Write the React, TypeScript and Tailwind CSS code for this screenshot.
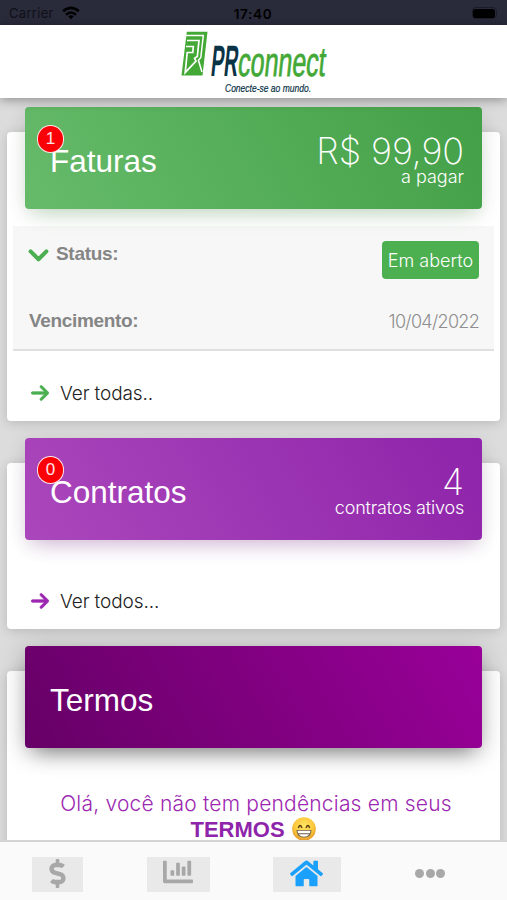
import React from "react";
import { FaChartBar, FaDollarSign, FaHome } from "react-icons/fa";
import { FaArrowRight, FaChevronDown } from "react-icons/fa6";

interface SummaryCardProps {
  title: string;
  badge?: string;
  value?: string;
  caption?: string;
  captionClass?: string;
  headerClass: string;
  className?: string;
  children: React.ReactNode;
}

const WifiIcon: React.FC = () => (
  <svg viewBox="0 0 18 14" className="h-[14px] w-[18px]" fill="none" stroke="#000" strokeWidth="2.6">
    <path d="M1.2 5.2 Q9 -1.600 16.800 5.200" />
    <path d="M4 8.700 Q9 4.300 14 8.700" />
    <path d="M6.200 10.200 Q9 8.200 11.800 10.200 L9 13.300 Z" fill="#000" stroke="none" />
  </svg>
);

const StatusBar: React.FC = () => (
  <div className="flex h-[25px] shrink-0 items-center justify-between bg-[#292a3a] pr-[10px] pl-[9px] text-black">
    <div className="flex w-[120px] items-center gap-[8px] pt-[1px]">
      <span className="font-['Inter'] text-[13px] leading-[16px] tracking-[0.3px] text-[#101018]">Carrier</span>
      <WifiIcon />
    </div>
    <span className="pt-[3px] font-['Inter'] text-[13.5px] leading-[16px] font-semibold tracking-[0.7px]">
      17:40
    </span>
    <div className="flex w-[120px] justify-end">
      <div className="mt-[1px] flex h-[12px] w-[25px] items-center justify-center rounded-[4px] border border-[#1c1c28]">
        <div className="h-[9px] w-[22px] rounded-[2.5px] bg-black"></div>
      </div>
    </div>
  </div>
);

const Logo: React.FC = () => (
  <svg viewBox="0 0 150 73" className="h-[73px] w-[150px] overflow-visible">
    {/* Mark */}
    <path d="M8.800 6.700 H29.500 L24.500 50.500 H3.500 Z" fill="#43a836" />
    <path
      d="M6.500 10.500 H25.300 L22.800 32.500 L20.400 35.300 L24 47"
      fill="none"
      stroke="#fff"
      strokeWidth="1.500"
    />
    <path
      d="M9 15.500 H21 L19.300 31.500 L16.600 33.300 L18 36 L7.200 47.500 L9.200 27.500 H14.800 L15.300 21.500 H8"
      fill="none"
      stroke="#fff"
      strokeWidth="1.700"
    />
    {/* Wordmark */}
    <g transform="translate(32 50.500) skewX(-6)" fontFamily="'Liberation Sans', sans-serif">
      <text
        fontSize="44"
        fontWeight="700"
        fill="#0b3346"
        textLength="27"
        lengthAdjust="spacingAndGlyphs"
      >
        PR
      </text>
      <text
        x="27"
        fontSize="41"
        fill="#43a836"
        stroke="#43a836"
        strokeWidth="0.800"
        textLength="87.500"
        lengthAdjust="spacingAndGlyphs"
      >
        connect
      </text>
    </g>
    <text
      x="47"
      y="66.500"
      fontSize="10.500"
      fontStyle="italic"
      fontFamily="'Liberation Sans', sans-serif"
      fill="#0b3346"
      stroke="#0b3346"
      strokeWidth="0.200"
      textLength="86"
      lengthAdjust="spacingAndGlyphs"
    >
      Conecte-se ao mundo.
    </text>
  </svg>
);

const GrinEmoji: React.FC = () => (
  <svg viewBox="0 0 24 24" className="ml-[7px] inline-block h-[24px] w-[24px] align-top">
    <defs>
      <radialGradient id="face" cx="50%" cy="38%" r="62%">
        <stop offset="0%" stopColor="#ffe566" />
        <stop offset="65%" stopColor="#fcc83a" />
        <stop offset="100%" stopColor="#e5952a" />
      </radialGradient>
    </defs>
    <circle cx="12" cy="12" r="11.800" fill="url(#face)" />
    <path
      d="M6.500 10.500 Q8 6.500 9.800 10.500 M14.200 10.500 Q16 6.500 17.500 10.500"
      fill="none"
      stroke="#5c3a12"
      strokeWidth="1.400"
      strokeLinecap="round"
    />
    <path d="M4.500 13 H19.500 Q19.500 20.500 12 20.500 Q4.500 20.500 4.500 13 Z" fill="#6b5a45" />
    <path
      d="M5.500 13.700 H18.500 L18 16.300 H6 Z M6.600 17.200 H17.400 Q15.500 19.700 12 19.700 Q8.500 19.700 6.600 17.200 Z"
      fill="#fff"
    />
  </svg>
);

const SummaryCard: React.FC<SummaryCardProps> = ({
  title,
  badge,
  value,
  caption,
  captionClass,
  headerClass,
  className,
  children,
}) => (
  <section
    className={`mx-[7px] w-[493px] shrink-0 rounded-[4px] bg-white shadow-[0_2px_12px_rgba(0,0,0,0.16)] ${className ?? ""}`}
  >
    <div
      className={`relative mx-[18px] -mt-[25px] flex h-[102px] w-[457px] justify-between rounded-[4px] px-[18px] text-white ${headerClass}`}
    >
      <h2 className="mt-[35px] ml-[7px] text-[31.5px] leading-[38px]">{title}</h2>
      {badge && (
        <span className="absolute top-[18px] left-[12px] flex h-[28px] w-[27px] items-center justify-center rounded-full border-[1.5px] border-white/90 bg-[#fb0006] text-[17px] text-white/90">
          {badge}
        </span>
      )}
      {value && (
        <div className="mt-[26px] text-right font-['Inter'] font-light">
          <div className="text-[36px] leading-[36px] font-extralight tracking-[-0.1px]">{value}</div>
          <div className={`-mt-[2px] text-[18px] leading-[20px] ${captionClass ?? ""}`}>{caption}</div>
        </div>
      )}
    </div>
    {children}
  </section>
);

const SeeAll: React.FC<{ label: string; iconClass: string }> = ({ label, iconClass }) => (
  <a className="flex h-[24px] items-center gap-[11px] pl-[24px] text-[#222]">
    <FaArrowRight className={`mb-[2px] h-[20px] w-[18px] ${iconClass}`} stroke="currentColor" strokeWidth={18} />
    <span className="font-['Inter'] text-[19px] font-light tracking-[-0.1px]">{label}</span>
  </a>
);

const BottomNav: React.FC = () => (
  <nav className="flex h-[60px] shrink-0 items-start border-t-2 border-[#d3d3d3] bg-[#fafafa] pt-[15px] pl-[32px] text-[#a8a8a8]">
    <button className="flex h-[35px] w-[51px] items-center justify-center bg-[#e9e9e9]">
      <FaDollarSign className="mb-[3px] h-[29px] w-[17px]" />
    </button>
    <button className="ml-[64px] flex h-[35px] w-[63px] items-center justify-center bg-[#e9e9e9]">
      <FaChartBar className="mr-[2px] mb-[5px] h-[30px] w-[30px]" />
    </button>
    <button className="ml-[63px] flex h-[35px] w-[68px] items-center justify-center bg-[#e9e9e9] text-[#1ba1fb]">
      <FaHome className="mr-[2px] mb-[3px] h-[33px] w-[33px]" />
    </button>
    <button className="ml-[74px] flex h-[32px] items-center gap-[1.5px]">
      <span className="h-[9px] w-[9px] rounded-full bg-[#a8a8a8]"></span>
      <span className="h-[9px] w-[9px] rounded-full bg-[#a8a8a8]"></span>
      <span className="h-[9px] w-[9px] rounded-full bg-[#a8a8a8]"></span>
    </button>
  </nav>
);

const App: React.FC = () => {
  return (
    <div className="flex h-[900px] w-[507px] flex-col overflow-hidden bg-[#dcdcdc] font-['Liberation_Sans',sans-serif]">
      <StatusBar />
      <header className="relative z-10 flex h-[73px] shrink-0 justify-center bg-white pr-[2px] shadow-[0_2px_10px_rgba(0,0,0,0.35)]">
        <Logo />
      </header>

      <main className="flex min-h-0 flex-1 flex-col overflow-hidden pt-[34px]">
        {/* Faturas */}
        <SummaryCard
          title="Faturas"
          badge="1"
          value="R$ 99,90"
          caption="a pagar"
          className="h-[289px]"
          headerClass="bg-[linear-gradient(60deg,#66bb6a,#43a047)] shadow-[0_12px_20px_-10px_rgba(76,175,80,0.28),0_4px_20px_0_rgba(0,0,0,0.12)]"
        >
          <div className="mx-[6px] mt-[17px] h-[125px] border-b-2 border-[#e0e0e0] bg-[#f7f7f7] pr-[15px] pl-[15px] text-[#858585]">
            <div className="flex justify-between pt-[15px]">
              <div className="flex h-[26px] items-center gap-[7px]">
                <FaChevronDown
                  className="h-[22px] w-[21px] text-[#4caf50]"
                  stroke="currentColor"
                  strokeWidth={35}
                />
                <span className="text-[19px] font-bold tracking-[-0.3px]">Status:</span>
              </div>
              <span className="flex h-[38px] w-[97px] items-center justify-center rounded-[4px] bg-[#4caf50] font-['Inter'] text-[18px] font-light text-white">
                Em aberto
              </span>
            </div>
            <div className="mt-[30px] flex h-[24px] items-center justify-between">
              <span className="pl-px text-[19px] font-bold tracking-[-0.35px]">Vencimento:</span>
              <span className="font-['Inter'] text-[18px] font-light tracking-[-0.7px] text-[#8e8e8e]">
                10/04/2022
              </span>
            </div>
          </div>
          <div className="mt-[31px]">
            <SeeAll label="Ver todas.." iconClass="text-[#4caf50]" />
          </div>
        </SummaryCard>

        {/* Contratos */}
        <SummaryCard
          title="Contratos"
          badge="0"
          value="4"
          caption="contratos ativos"
          captionClass="tracking-[-0.2px]"
          className="mt-[42px] h-[166px]"
          headerClass="bg-[linear-gradient(60deg,#ab47bc,#8e24aa)] shadow-[0_12px_20px_-10px_rgba(156,39,176,0.28),0_4px_20px_0_rgba(0,0,0,0.12)]"
        >
          <div className="mt-[50px]">
            <SeeAll label="Ver todos..." iconClass="text-[#9c27b0]" />
          </div>
        </SummaryCard>

        {/* Termos */}
        <SummaryCard
          title="Termos"
          className="mt-[42px] h-[200px]"
          headerClass="bg-[linear-gradient(60deg,#660066,#990099)] shadow-[0_12px_20px_-10px_rgba(0,0,0,0.4),0_4px_25px_0_rgba(0,0,0,0.25)]"
        >
          <div className="pt-[43px] pl-[5px] text-center font-['Inter'] text-[21px] leading-[26px] font-light text-[#9c27b0]">
            <p className="tracking-[0.2px]">Olá, você não tem pendências em seus</p>
            <p className="pr-[6px] font-['Liberation_Sans'] text-[22px] font-bold text-[#8e24aa]">
              TERMOS
              <GrinEmoji />
            </p>
          </div>
        </SummaryCard>
      </main>

      <BottomNav />
    </div>
  );
};

export default App;
